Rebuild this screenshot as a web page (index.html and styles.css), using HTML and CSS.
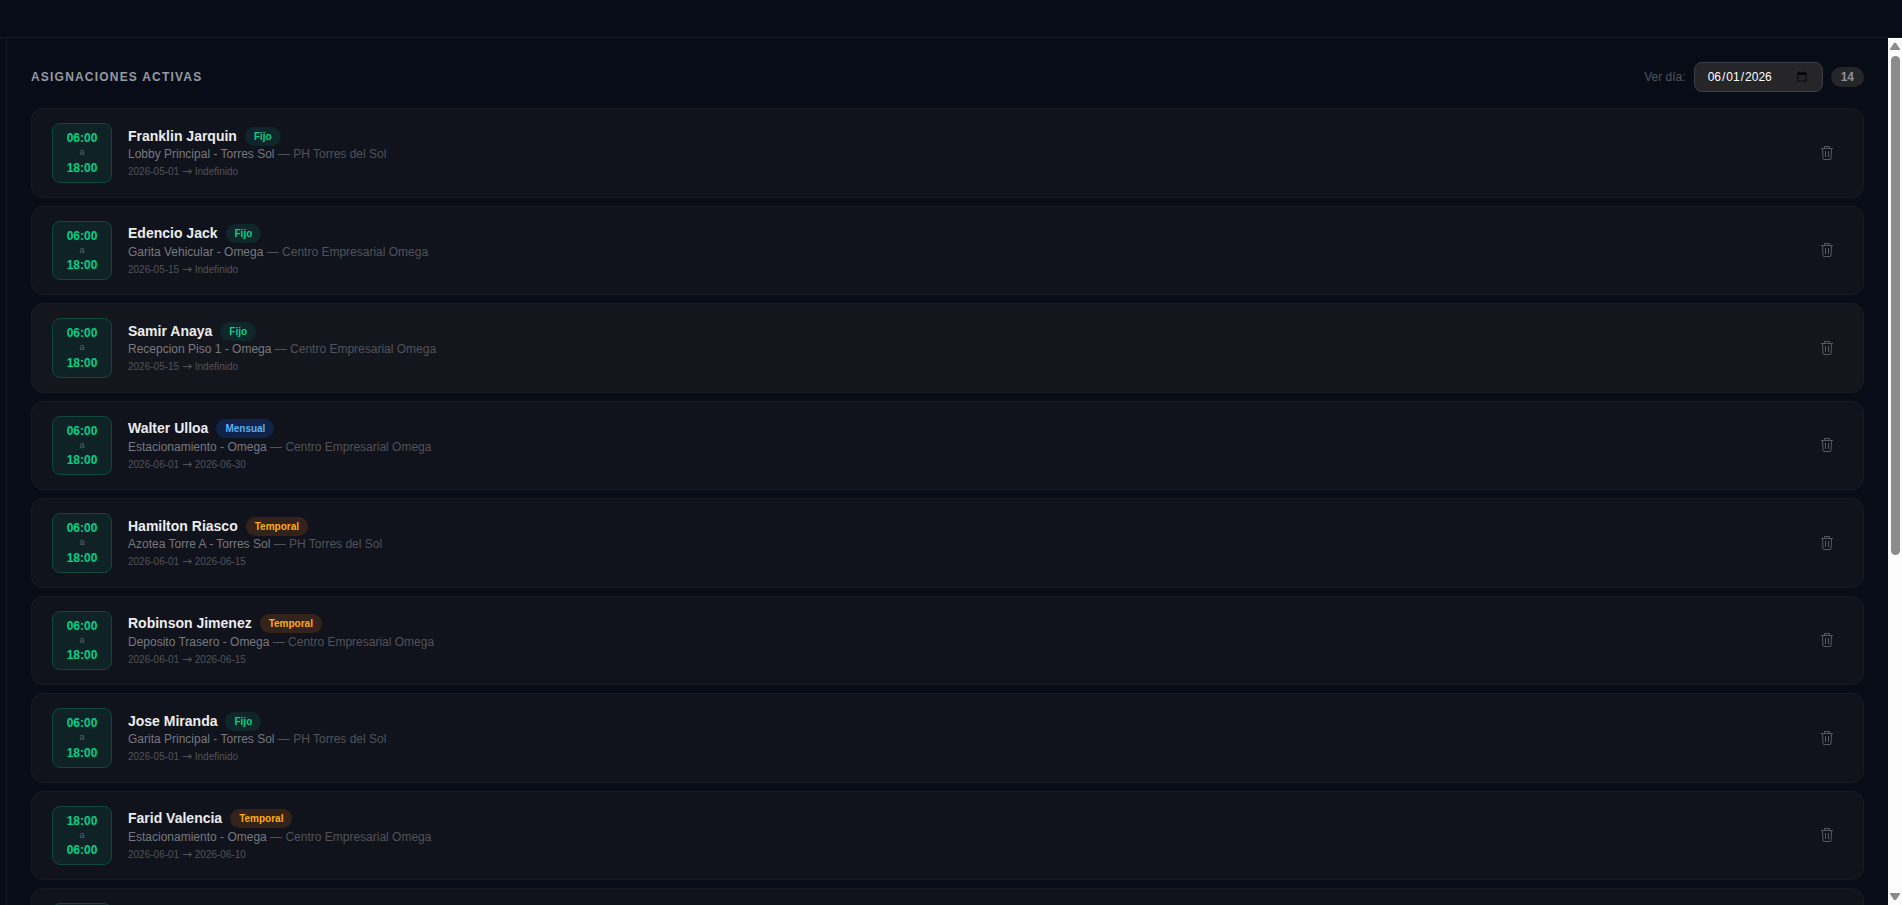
FILE: index.html
```
<!DOCTYPE html>
<html lang="es">
<head>
    <meta charset="UTF-8">
    <meta name="viewport" content="width=device-width, initial-scale=1.0">
    <title>Asignaciones activas</title>
    <link rel="stylesheet" href="styles.css">
</head>
<body>
    <header class="topbar"></header>

    <div class="workspace">
        <main class="panel">
            <div class="panel-header">
                <h2 class="panel-title">Asignaciones activas</h2>
                <div class="panel-filters">
                    <label for="dia">Ver día:</label>
                    <input type="date" id="dia" class="date-input" value="2026-06-01">
                    <span class="count">14</span>
                </div>
            </div>

            <div class="list" id="list"></div>
        </main>

        <div class="scrollbar" aria-hidden="true">
            <svg class="scroll-arrow" width="10" height="8" viewBox="0 0 10 8"><path d="M4 1h2l4 6v1H0V7z"/></svg>
            <div class="scroll-track"><div class="scroll-thumb"></div></div>
            <svg class="scroll-arrow" width="10" height="8" viewBox="0 0 10 8"><path d="M0 0h10v1L6 7H4L0 1z"/></svg>
        </div>
    </div>

    <template id="card">
        <article class="card">
            <div class="shift">
                <span class="shift-start"></span>
                <span class="shift-sep"></span>
                <span class="shift-end"></span>
            </div>
            <div class="info">
                <div class="name-row">
                    <span class="name"></span>
                    <span class="badge"></span>
                </div>
                <div class="post"><span class="post-name"></span> <span class="client"></span></div>
                <div class="dates"><span class="from"></span> <span class="arrow"></span> <span class="to"></span></div>
            </div>
            <button class="delete" type="button" aria-label="Eliminar asignación">
                <svg width="14" height="16" viewBox="0 0 14 16" fill="none" stroke="currentColor">
                    <path d="M1 3.5h12M4.5 3V1.5h5V3M2.5 3.5l.5 10q.1 1 1 1h6q.9 0 1-1l.5-10M5.5 6v6M8.5 6v6"/>
                </svg>
            </button>
        </article>
    </template>

    <script src="app.js"></script>
</body>
</html>
```
FILE: styles.css
```
* {
    box-sizing: border-box;
}
body {
    margin: 0;
    height: 100vh;
    display: flex;
    flex-direction: column;
    overflow: hidden;
    background: #080c17;
    color: #fff;
    font-family: "Liberation Sans", Arial, sans-serif;
    line-height: 1.5;
}
.topbar {
    flex: none;
    height: 38px;
    border-bottom: 1px solid #191b20;
}
.workspace {
    flex: 1;
    min-height: 0;
    display: flex;
    padding-left: 6px;
}
.panel {
    flex: 1;
    min-width: 0;
    overflow: hidden;
    padding: 24px;
    border-left: 1px solid #191b20;
}
.panel-header {
    display: flex;
    justify-content: space-between;
    align-items: center;
    margin-bottom: 16px;
}
.panel-title {
    margin: 0;
    font-size: 12px;
    line-height: 16px;
    letter-spacing: 0.1em;
    text-transform: uppercase;
    color: #969aa3;
}
.panel-filters {
    display: flex;
    align-items: center;
    gap: 8px;
    font-size: 12px;
    color: #53555b;
}
.date-input {
    width: 129px;
    height: 30px;
    padding: 6px 12px;
    border: 1px solid #374047;
    border-radius: 8px;
    background: #262628;
    color: #fff;
    font-family: inherit;
    font-size: 12px;
}
.count {
    padding: 2px 10px;
    border-radius: 10px;
    background: #262628;
    color: #8793a1;
    font-size: 12px;
    font-weight: bold;
    line-height: 16px;
}
.list {
    display: flex;
    flex-direction: column;
    gap: 8px;
}

/* Cards */
.card {
    display: flex;
    align-items: center;
    gap: 16px;
    padding: 14px 20px;
    border: 1px solid #191b20;
    border-radius: 12px;
    background: #10121c;
}
.card.active {
    background: #14161e;
}
.shift {
    display: flex;
    flex-direction: column;
    width: 60px;
    padding: 6px;
    border: 1px solid #0b4a3b;
    border-radius: 8px;
    background: #0f2326;
    color: #00d188;
    font-size: 12px;
    font-weight: bold;
    line-height: 16px;
    text-align: center;
}
.shift-sep {
    color: #5a6166;
    font-size: 9px;
    font-weight: normal;
    line-height: 1.5;
}
.info {
    flex: 1;
    min-width: 0;
}
.name-row {
    display: flex;
    align-items: center;
    gap: 8px;
    height: 20px;
}
.name {
    color: #ececee;
    font-size: 14px;
    font-weight: bold;
}
.badge {
    padding: 2px 9px;
    border-radius: 10px;
    font-size: 10px;
    font-weight: bold;
}
.badge.fijo {
    background: #0f272a;
    color: #00d188;
}
.badge.mensual {
    background: #10234a;
    color: #60aeee;
}
.badge.temporal {
    background: #33231b;
    color: #fcad0a;
}
.post {
    color: #77797d;
    font-size: 12px;
    line-height: 16px;
}
.client {
    color: #505258;
}
.dates {
    margin-top: 2px;
    color: #505258;
    font-size: 10px;
}
.arrow {
    font-family: "DejaVu Sans", sans-serif;
    font-size: 12px;
    line-height: 1;
}
.delete {
    display: flex;
    padding: 8px 9px;
    border: 0;
    background: none;
    color: #565a60;
    cursor: pointer;
}

/* Scrollbar */
.scrollbar {
    display: flex;
    flex-direction: column;
    align-items: center;
    gap: 6px;
    width: 14px;
    padding: 4px 0;
    background: #fcfcfc;
}
.scroll-arrow {
    flex: none;
    fill: #8b8b8b;
}
.scroll-track {
    flex: 1;
    width: 9px;
}
.scroll-thumb {
    height: 60%;
    border-radius: 5px;
    background: #8b8b8b;
}
```
FILE: app.js
```
const assignments = [
    { start: '06:00', end: '18:00', name: 'Franklin Jarquin', type: 'Fijo', post: 'Lobby Principal - Torres Sol', client: 'PH Torres del Sol', from: '2026-05-01', to: 'Indefinido' },
    { start: '06:00', end: '18:00', name: 'Edencio Jack', type: 'Fijo', post: 'Garita Vehicular - Omega', client: 'Centro Empresarial Omega', from: '2026-05-15', to: 'Indefinido' },
    { start: '06:00', end: '18:00', name: 'Samir Anaya', type: 'Fijo', post: 'Recepcion Piso 1 - Omega', client: 'Centro Empresarial Omega', from: '2026-05-15', to: 'Indefinido', active: true },
    { start: '06:00', end: '18:00', name: 'Walter Ulloa', type: 'Mensual', post: 'Estacionamiento - Omega', client: 'Centro Empresarial Omega', from: '2026-06-01', to: '2026-06-30' },
    { start: '06:00', end: '18:00', name: 'Hamilton Riasco', type: 'Temporal', post: 'Azotea Torre A - Torres Sol', client: 'PH Torres del Sol', from: '2026-06-01', to: '2026-06-15' },
    { start: '06:00', end: '18:00', name: 'Robinson Jimenez', type: 'Temporal', post: 'Deposito Trasero - Omega', client: 'Centro Empresarial Omega', from: '2026-06-01', to: '2026-06-15' },
    { start: '06:00', end: '18:00', name: 'Jose Miranda', type: 'Fijo', post: 'Garita Principal - Torres Sol', client: 'PH Torres del Sol', from: '2026-05-01', to: 'Indefinido' },
    { start: '18:00', end: '06:00', name: 'Farid Valencia', type: 'Temporal', post: 'Estacionamiento - Omega', client: 'Centro Empresarial Omega', from: '2026-06-01', to: '2026-06-10' }
];

const list = document.getElementById('list');
const template = document.getElementById('card');

assignments.forEach(item => {
    const card = template.content.cloneNode(true);
    const set = (selector, text) => {
        card.querySelector(selector).textContent = text;
    };
    if (item.active) {
        card.querySelector('.card').classList.add('active');
    }
    set('.shift-start', item.start);
    set('.shift-sep', 'a');
    set('.shift-end', item.end);
    set('.name', item.name);
    set('.badge', item.type);
    card.querySelector('.badge').classList.add(item.type.toLowerCase());
    set('.post-name', item.post);
    set('.client', '— ' + item.client);
    set('.from', item.from);
    set('.arrow', '→');
    set('.to', item.to);
    list.appendChild(card);
});

const pending = template.content.cloneNode(true);
pending.querySelectorAll('.shift span').forEach(span => {
    span.textContent = '\u00a0';
});
list.appendChild(pending);
```
